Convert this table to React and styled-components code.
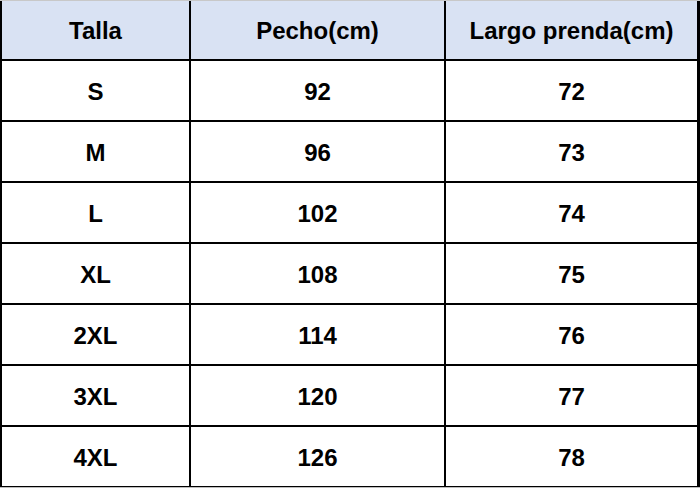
import styled, { createGlobalStyle } from "styled-components";

const GlobalStyle = createGlobalStyle`
  html, body {
    margin: 0;
    padding: 0;
    background: #ffffff;
  }
`;

const Table = styled.div`
  display: grid;
  grid-template-columns: 187px 253px 251px;
  grid-template-rows: 58px;
  grid-auto-rows: 59px;
  gap: 2px;
  width: 700px;
  height: 488px;
  box-sizing: border-box;
  padding: 0 1px 0 2px;
  background: #000000;
  border-top: 1px solid #c8c8c8;
  border-bottom: 1px solid #bdbdbd;
  font-family: "Liberation Sans", Arial, sans-serif;
`;

const Cell = styled.div`
  display: flex;
  align-items: center;
  justify-content: center;
  padding-top: 2px;
  box-sizing: border-box;
  background: ${(p) => (p.$head ? "#d9e2f3" : "#ffffff")};
  color: #000000;
  font-size: 24px;
  font-weight: 700;
`;

const headers = ["Talla", "Pecho(cm)", "Largo prenda(cm)"];

const rows = [
  ["S", "92", "72"],
  ["M", "96", "73"],
  ["L", "102", "74"],
  ["XL", "108", "75"],
  ["2XL", "114", "76"],
  ["3XL", "120", "77"],
  ["4XL", "126", "78"],
];

const App = () => {
  return (
    <>
      <GlobalStyle />
      <Table>
        {headers.map((h) => (
          <Cell key={h} $head>
            {h}
          </Cell>
        ))}
        {rows.map((row) =>
          row.map((value, i) => <Cell key={row[0] + i}>{value}</Cell>)
        )}
      </Table>
    </>
  );
};

export default App;
